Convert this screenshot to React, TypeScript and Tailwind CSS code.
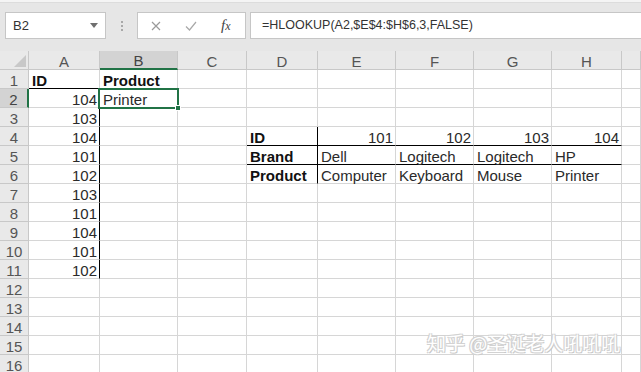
import React from "react";

// ------------------------------------------------------------ DATA
const cols = ["A", "B", "C", "D", "E", "F", "G", "H", "I"];

type Cell = { v: string; b?: boolean; r?: boolean };

const cells: Record<string, Cell> = {
  A1: { v: "ID", b: true },
  B1: { v: "Product", b: true },
  B2: { v: "Printer" },
  D4: { v: "ID", b: true },
  E4: { v: "101", r: true },
  F4: { v: "102", r: true },
  G4: { v: "103", r: true },
  H4: { v: "104", r: true },
  D5: { v: "Brand", b: true },
  E5: { v: "Dell" },
  F5: { v: "Logitech" },
  G5: { v: "Logitech" },
  H5: { v: "HP" },
  D6: { v: "Product", b: true },
  E6: { v: "Computer" },
  F6: { v: "Keyboard" },
  G6: { v: "Mouse" },
  H6: { v: "Printer" },
};

["104", "103", "104", "101", "102", "103", "101", "104", "101", "102"].forEach((v, i) => {
  cells["A" + (i + 2)] = { v, r: true };
});

const blackBottom = new Set(["A1", "D4", "E4", "F4", "G4", "H4", "D5", "E5", "F5", "G5", "H5"]);
const blackRight = new Set(["A2", "A3", "A4", "A5", "A6", "A7", "A8", "A9", "A10", "A11", "D4", "D5", "D6"]);

const rows = Array.from({ length: 16 }, (_, i) => i + 1);

// ------------------------------------------------------------ PIECES
const FormulaBar = () => (
  <div className="h-[51px] bg-[#e6e6e6] flex flex-col">
    <div className="h-[3px] bg-[#f4f4f4] border-b border-[#dcdcdc]" />
    <div className="flex items-start mt-[9px]">
      <div className="ml-[5px] w-[101px] h-[27px] bg-white border border-[#c6c6c6] flex items-center justify-between pl-[7px] pr-[7px]">
        <span className="text-[13px] text-[#333]">B2</span>
        <svg width="8" height="5" viewBox="0 0 8 5">
          <path d="M0 0 L8 0 L4 5 Z" fill="#6f6f6f" />
        </svg>
      </div>
      <div className="w-[31px] h-[27px] flex flex-col items-center justify-center gap-[2px]">
        <span className="w-[2px] h-[2px] bg-[#a8a8a8]" />
        <span className="w-[2px] h-[2px] bg-[#a8a8a8]" />
        <span className="w-[2px] h-[2px] bg-[#a8a8a8]" />
      </div>
      <div className="w-[109px] h-[27px] bg-white border border-[#c6c6c6] flex items-center">
        <svg width="10" height="10" viewBox="0 0 10 10" className="ml-[13px]">
          <path d="M1 1 L9 9 M9 1 L1 9" stroke="#9a9a9a" strokeWidth="1.2" />
        </svg>
        <svg width="12" height="10" viewBox="0 0 12 10" className="ml-[24px]">
          <path d="M1 5.5 L4.5 9 L11 1" stroke="#a8a8a8" strokeWidth="1.2" fill="none" />
        </svg>
        <span className="ml-[24px] font-['Liberation_Serif',serif] italic text-[15px] text-[#444] leading-none">
          f<span className="text-[12px]">x</span>
        </span>
      </div>
      <div className="ml-[4px] flex-1 h-[27px] bg-white border border-r-0 border-[#c6c6c6] flex items-center pl-[11px]">
        <span className="text-[12.5px] text-[#333]">=HLOOKUP(A2,$E$4:$H$6,3,FALSE)</span>
      </div>
    </div>
  </div>
);

const DataCell = ({ id }: { id: string }) => {
  const c = cells[id];
  return (
    <div
      className={`border-r border-b flex items-end overflow-visible whitespace-nowrap leading-[14px] text-[15px] ${
        blackBottom.has(id) ? "border-b-black" : "border-b-[#d6d6d6]"
      } ${blackRight.has(id) ? "border-r-black" : "border-r-[#d6d6d6]"} ${
        c?.r ? "justify-end pr-[2px]" : "justify-start pl-[3px]"
      } ${c?.b ? "font-bold text-[#111]" : "text-[#2a2a2a]"}`}
    >
      {c ? c.v : ""}
    </div>
  );
};

// ------------------------------------------------------------ APP
export default function App() {
  return (
    <div className="w-[641px] h-[372px] overflow-hidden bg-white relative font-['Liberation_Sans','Noto_Sans_CJK_SC',sans-serif]">
      <FormulaBar />
      <div className="relative">
        <div className="grid grid-cols-[29px_71px_78px_69px_71px_78px_78px_78px_70px_1fr] auto-rows-[19px]">
          {/* header row */}
          <div className="bg-[#e9e9e9] border-r border-b border-[#c8c8c8] flex items-end justify-end pr-[2px] pb-[2px]">
            <svg width="12" height="12" viewBox="0 0 12 12">
              <path d="M12 0 L12 12 L0 12 Z" fill="#c8c8c8" />
            </svg>
          </div>
          {cols.map((c) =>
            c === "B" ? (
              <div
                key={c}
                className="bg-[#d3d3d3] border-r border-[#c8c8c8] border-b-2 border-b-[#217346] flex items-end justify-center leading-[14px] text-[15px] text-[#444]"
              >
                {c}
              </div>
            ) : (
              <div
                key={c}
                className="bg-[#e9e9e9] border-r border-b border-[#c8c8c8] flex items-end justify-center leading-[14px] text-[15px] text-[#555]"
              >
                {c === "I" ? "" : c}
              </div>
            )
          )}
          {rows.map((r) => (
            <React.Fragment key={r}>
              {r === 2 ? (
                <div className="bg-[#d3d3d3] border-b border-b-[#c8c8c8] border-r-2 border-r-[#217346] flex items-end justify-center leading-[14px] text-[15px] text-[#444]">
                  {r}
                </div>
              ) : (
                <div className="bg-[#e9e9e9] border-r border-b border-[#c8c8c8] flex items-end justify-center leading-[14px] text-[15px] text-[#555]">
                  {r}
                </div>
              )}
              {cols.map((c) => (
                <DataCell key={c + r} id={c + r} />
              ))}
            </React.Fragment>
          ))}
        </div>

        {/* active cell B2 */}
        <div className="absolute left-[98px] top-[37px] w-[81px] h-[21px] border-2 border-[#217346] pointer-events-none" />
        <div className="absolute left-[175px] top-[54px] w-[6px] h-[6px] bg-[#217346] border border-white" />
      </div>

      {/* watermark */}
      <div className="absolute left-[427px] top-[331px] text-[19px] leading-[24px] text-white font-['Noto_Sans_CJK_SC',sans-serif] [text-shadow:-1px_-1px_0_#d2d2d2,1px_-1px_0_#d2d2d2,-1px_1px_0_#d2d2d2,1px_1px_0_#c8c8c8]">
        知乎 @圣诞老人吼吼吼
      </div>
    </div>
  );
}
